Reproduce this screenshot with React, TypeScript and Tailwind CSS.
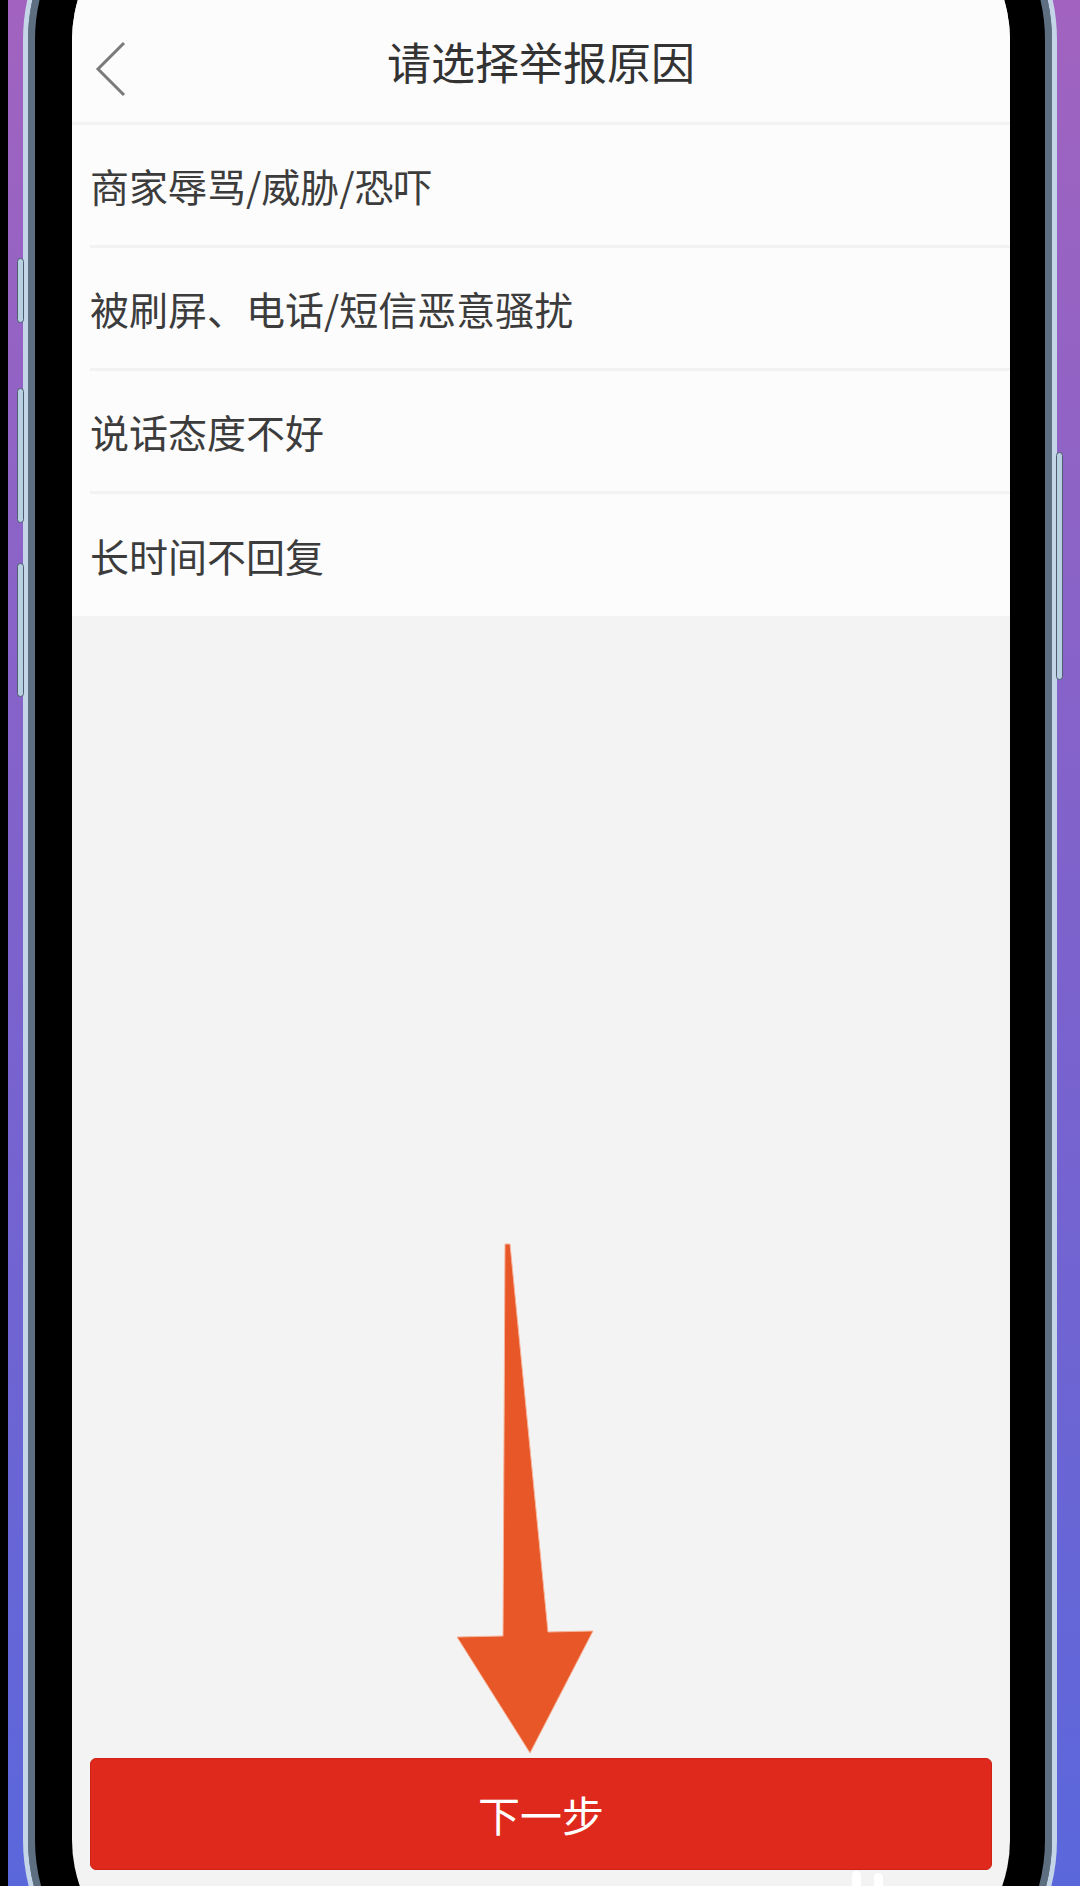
const reasons = [
    "商家辱骂/威胁/恐吓",
    "被刷屏、电话/短信恶意骚扰",
    "说话态度不好",
    "长时间不回复",
];

function BackIcon() {
    return (
        <svg width="32" height="58" viewBox="0 0 32 58" fill="none">
            <polyline points="29,3 3,29 29,55" stroke="#7a7a7a" strokeWidth="3" strokeLinejoin="miter" />
        </svg>
    );
}

function PointerArrow() {
    return (
        <svg className="absolute left-0 top-0" width="1080" height="1886" viewBox="0 0 1080 1886">
            <polygon
                points="505,1244 510,1244 548,1632 593,1631 530,1753 457,1637 503,1636"
                fill="#e85727"
                stroke="#f6b49a"
                strokeWidth="1"
            />
        </svg>
    );
}

export default function App() {
    return (
        <div
            className="relative flex h-[1886px] w-[1080px] overflow-hidden bg-gradient-to-b from-[#a163bf] via-[#7c62cc] to-[#5a67db]"
            style={{ fontFamily: '"Noto Sans CJK SC", "Noto Sans", sans-serif' }}
        >
            <div className="h-full w-[8px] shrink-0 bg-black" />

            {/* phone */}
            <div className="-mt-[149px] ml-[15px] h-[2178px] w-[1034px] shrink-0 rounded-[189px] border-[5px] border-[#c3d5e6] bg-[#5c6e80]">
                <div className="h-full w-full rounded-[184px] border-[7px] border-[#5c6e80] bg-black pl-[37px] pr-[35px] py-[37px]">
                    <div className="flex h-full w-full flex-col overflow-hidden rounded-[140px] bg-[#f3f3f4]">
                        <div className="h-[100px] shrink-0 bg-[#fcfcfd]" />

                        <div className="relative flex h-[122px] shrink-0 items-center justify-center bg-[#fcfcfd]">
                            <div className="absolute left-[23px] top-[40px]">
                                <BackIcon />
                            </div>
                            <span className="text-[44px] leading-none text-[#333]">请选择举报原因</span>
                        </div>
                        <div className="h-[3px] shrink-0 bg-[#f2f2f4]" />

                        <div className="flex shrink-0 flex-col bg-[#fcfcfd]">
                            {reasons.map((r, i) => (
                                <div key={r}>
                                    <div className={`flex items-center pl-[18px] ${i === reasons.length - 1 ? "h-[122px]" : "h-[120px]"}`}>
                                        <span className="text-[39px] leading-none text-[#3c3c3c]">{r}</span>
                                    </div>
                                    {i < reasons.length - 1 && <div className="ml-[18px] h-[3px] bg-[#f2f2f4]" />}
                                </div>
                            ))}
                        </div>

                        <div className="flex-1" />

                        <div className="mx-[18px] mb-[110px] flex h-[112px] shrink-0 items-center justify-center rounded-[6px] border border-[#cf2116] bg-[#e0291d]">
                            <span className="text-[42px] leading-none text-white">下一步</span>
                        </div>
                    </div>
                </div>
            </div>

            {/* side buttons */}
            <div className="absolute left-[17px] top-[258px] h-[65px] w-[7px] rounded-sm border border-[#4b5d6e] bg-[#b9cfe2]" />
            <div className="absolute left-[17px] top-[388px] h-[135px] w-[7px] rounded-sm border border-[#4b5d6e] bg-[#b9cfe2]" />
            <div className="absolute left-[17px] top-[563px] h-[134px] w-[7px] rounded-sm border border-[#4b5d6e] bg-[#b9cfe2]" />
            <div className="absolute left-[1056px] top-[452px] h-[228px] w-[7px] rounded-sm border border-[#4b5d6e] bg-[#b9cfe2]" />

            <PointerArrow />

            {/* watermark dots */}
            <div className="absolute left-[852px] top-[1871px] h-[18px] w-[9px] rounded-full bg-white" />
            <div className="absolute left-[874px] top-[1873px] h-[18px] w-[9px] rounded-full bg-white" />
        </div>
    );
}
